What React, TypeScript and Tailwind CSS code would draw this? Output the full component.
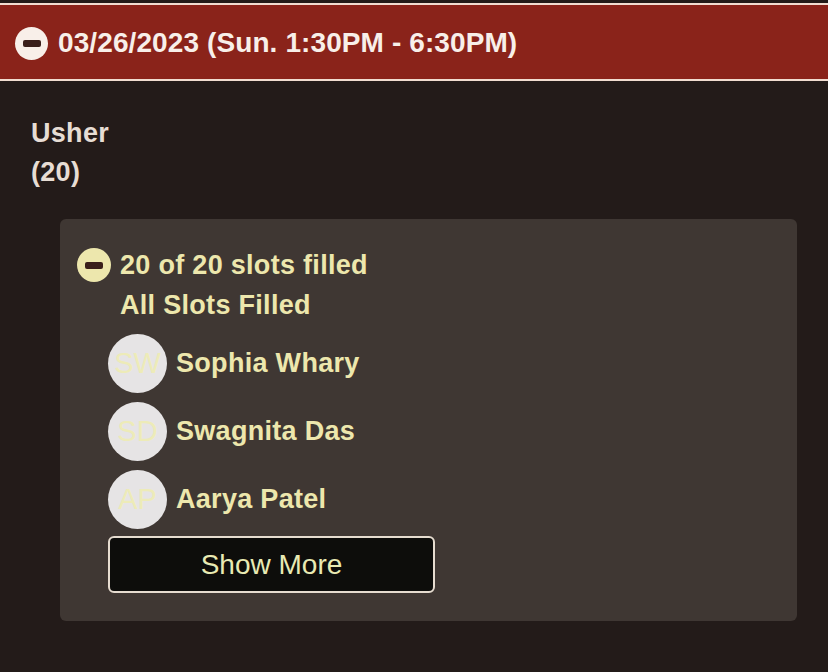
import React from "react";

const people = [
  { initials: "SW", name: "Sophia Whary" },
  { initials: "SD", name: "Swagnita Das" },
  { initials: "AP", name: "Aarya Patel" },
];

function MinusCircle({ className }: { className: string }) {
  return (
    <div className={`rounded-full flex items-center justify-center shrink-0 ${className}`}>
      <div className="w-[18px] h-[7px] rounded-[2px] bg-[#3a1f1b]" />
    </div>
  );
}

export default function App() {
  return (
    <div className="min-h-[672px] bg-[#231b19] font-['Liberation_Sans',Arial,sans-serif]">
      {/* Date header */}
      <div className="pt-[3px]">
        <div className="border-y-2 border-[#f1dcd0] bg-[#8a231a]">
          <div className="border-t-2 border-[#8a231a] h-[74px] flex items-center pl-[15px] gap-[10px]">
            <MinusCircle className="w-[33px] h-[33px] bg-[#f8efe9]" />
            <span className="text-[28px] font-bold text-[#f8efe9] tracking-[0.1px]">
              03/26/2023 (Sun. 1:30PM - 6:30PM)
            </span>
          </div>
        </div>
      </div>

      {/* Role */}
      <div className="pl-[31px] pt-[33px] text-[27px] font-bold text-[#e7ddd4] leading-[39px] tracking-[0.3px]">
        <div>Usher</div>
        <div>(20)</div>
      </div>

      {/* Slot card */}
      <div className="ml-[60px] mr-[31px] mt-[27px] bg-[#3f3733] rounded-[6px] pt-[26px] pb-[28px] pl-[17px] tracking-[0.3px]">
        <div className="flex items-center gap-[9px] h-[40px]">
          <MinusCircle className="w-[34px] h-[34px] bg-[#ede7ad]" />
          <span className="text-[27px] font-bold text-[#ede7ad]">20 of 20 slots filled</span>
        </div>
        <div className="pl-[43px] text-[27px] font-bold text-[#ede7ad] leading-[40px]">
          All Slots Filled
        </div>
        <div className="pl-[31px] mt-[9px] flex flex-col gap-[9px]">
          {people.map((p) => (
            <div key={p.initials} className="flex items-center gap-[9px]">
              <div className="w-[59px] h-[59px] rounded-full bg-[#e6e4e5] flex items-center justify-center text-[29px] text-[#edebb8] tracking-normal">
                {p.initials}
              </div>
              <span className="text-[27px] font-bold text-[#ede7ad]">{p.name}</span>
            </div>
          ))}
          <button className="mt-[-2px] w-[327px] h-[57px] bg-[#0d0d0b] border-2 border-[#e6dcd0] rounded-[6px] text-[28px] text-[#e8eab3] tracking-normal">
            Show More
          </button>
        </div>
      </div>
    </div>
  );
}
